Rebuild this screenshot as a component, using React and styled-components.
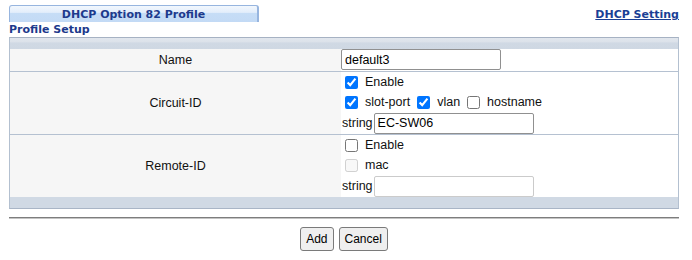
import React from "react";
import styled, { createGlobalStyle } from "styled-components";

const Global = createGlobalStyle`
  html, body { margin: 0; padding: 0; background: #fff; }
  body { font-family: "Liberation Sans", Arial, sans-serif; }
`;

const Page = styled.div`
  width: 670px;
  padding: 5px 0 0 9px;
`;

const TopBar = styled.div`
  display: flex;
  justify-content: space-between;
  align-items: baseline;
`;

const Tab = styled.div`
  box-sizing: border-box;
  width: 250px;
  height: 17px;
  border: 1px solid #97b5df;
  border-right-width: 2px;
  border-bottom: none;
  border-radius: 3px 3px 0 0;
  background: linear-gradient(to bottom, #f2f7fd 0%, #e3eefb 40%, #c6ddf6 45%, #c3daf5 100%);
  font: bold 11px "DejaVu Sans", Verdana, sans-serif;
  color: #1d3a8c;
  text-align: center;
  padding-top: 2px;
  line-height: 14px;
`;

const Link = styled.a`
  font: bold 11px "DejaVu Sans", Verdana, sans-serif;
  color: #1a3f95;
  text-decoration: underline;
  cursor: pointer;
`;

const Title = styled.div`
  height: 15px;
  padding-top: 1px;
  box-sizing: border-box;
  font: bold 11px "DejaVu Sans", Verdana, sans-serif;
  line-height: 14px;
  color: #1d3a8c;
`;

const Panel = styled.div`
  border: 1px solid #b3c0d0;
  border-top-color: #a6b2c3;
  border-bottom-color: #a9b5c6;
`;

const Band = styled.div`
  height: 11px;
  background: ${(p) =>
    p.$top ? "linear-gradient(to bottom, #e1e6ed 0%, #dce2ea 35%, #d0d9e4 45%, #cfd8e3 100%)" : "#d0d9e4"};
`;

const Row = styled.div`
  display: grid;
  grid-template-columns: 331px 1fr;
  border-bottom: ${(p) => (p.$last ? "none" : "1px solid #b5c1d1")};
  min-height: ${(p) => p.$h}px;
`;

const Label = styled.div`
  background: #f6f6f6;
  display: flex;
  align-items: center;
  justify-content: center;
  font-size: 12.5px;
  color: #111;
`;

const Value = styled.div`
  background: #fff;
  display: flex;
  flex-direction: column;
  font-size: 12.5px;
  color: #111;
`;

const Line = styled.div`
  height: ${(p) => p.$h || 20}px;
  display: flex;
  align-items: ${(p) => (p.$top ? "flex-start" : "center")};
  gap: ${(p) => (p.$gap !== undefined ? p.$gap : 3)}px;
`;

const Opt = styled.label`
  display: inline-flex;
  align-items: center;
  white-space: nowrap;
`;

const Check = styled.input.attrs({ type: "checkbox" })`
  width: 13px;
  height: 13px;
  margin: 0 7px 0 4px;
`;

const Field = styled.input`
  box-sizing: border-box;
  width: 160px;
  height: 21px;
  margin: 0;
  padding: 1px 3px;
  border: 1px solid ${(p) => (p.disabled ? "#cbcbcb" : "#909090")};
  border-radius: 2px;
  background: #fff;
  font: 12.5px "Liberation Sans", Arial, sans-serif;
  color: #000;
  outline: none;
`;

const StringLabel = styled.span`
  padding-left: 1px;
`;

const Rule = styled.div`
  margin-top: 8px;
  border-top: 1px solid #7d7d7d;
  border-bottom: 1px solid #c4c4c4;
`;

const Actions = styled.div`
  display: flex;
  justify-content: center;
  gap: 5px;
  margin-top: 8px;
`;

const Button = styled.button`
  height: 24px;
  padding: 0 5px;
  border: 1px solid #7a7a7a;
  border-radius: 3px;
  background: #efefef;
  font: 12px "Liberation Sans", Arial, sans-serif;
  color: #000;
`;

export default function App() {
  return (
    <>
      <Global />
      <Page>
        <TopBar>
          <Tab>DHCP Option 82 Profile</Tab>
          <Link>DHCP Setting</Link>
        </TopBar>
        <Title>Profile Setup</Title>
        <Panel>
          <Band $top />
          <Row $h={22}>
            <Label>Name</Label>
            <Value>
              <Line $h={22} $top>
                <Field defaultValue="default3" />
              </Line>
            </Value>
          </Row>
          <Row $h={62}>
            <Label>Circuit-ID</Label>
            <Value>
              <Line>
                <Opt><Check defaultChecked />Enable</Opt>
              </Line>
              <Line>
                <Opt><Check defaultChecked />slot-port</Opt>
                <Opt><Check defaultChecked />vlan</Opt>
                <Opt><Check />hostname</Opt>
              </Line>
              <Line $h={22} $gap={1}>
                <StringLabel>string</StringLabel>
                <Field defaultValue="EC-SW06" />
              </Line>
            </Value>
          </Row>
          <Row $h={62} $last>
            <Label>Remote-ID</Label>
            <Value>
              <Line>
                <Opt><Check />Enable</Opt>
              </Line>
              <Line>
                <Opt><Check disabled />mac</Opt>
              </Line>
              <Line $h={22} $gap={1}>
                <StringLabel>string</StringLabel>
                <Field disabled defaultValue="" />
              </Line>
            </Value>
          </Row>
          <Band />
        </Panel>
        <Rule />
        <Actions>
          <Button>Add</Button>
          <Button>Cancel</Button>
        </Actions>
      </Page>
    </>
  );
}
